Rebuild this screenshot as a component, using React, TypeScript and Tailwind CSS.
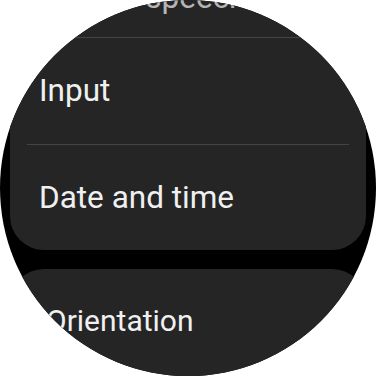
export default function App() {
  const font = { fontFamily: "Roboto, 'Noto Sans', sans-serif" };

  return (
    <div className="w-[376px] h-[376px] bg-white">
      <div
        className="relative w-[376px] h-[376px] rounded-full overflow-hidden bg-black"
        style={font}
      >
        <div className="flex flex-col gap-[19px] px-[10px]">
          {/* Settings card */}
          <div className="bg-[#252525] rounded-b-[34px]">
            <div className="h-[37px] flex items-end pb-[21px] pl-[30px]">
              <span className="text-[31.5px] leading-[36px] text-[#b5b5b5] whitespace-nowrap">
                Text-to-speech
              </span>
            </div>
            <div className="mx-[17px] h-px bg-[#444444]" />
            <div className="h-[106px] flex items-center pl-[29px]">
              <span className="text-[31.5px] leading-[36px] text-[#f0f0f0]">Input</span>
            </div>
            <div className="mx-[17px] h-px bg-[#444444]" />
            <div className="h-[105px] flex items-center pl-[29px]">
              <span className="text-[31.5px] leading-[36px] text-[#f0f0f0]">
                Date and time
              </span>
            </div>
          </div>

          {/* Next card */}
          <div className="bg-[#252525] rounded-t-[34px] h-[130px]">
            <div className="h-[104px] flex items-center pl-[36px]">
              <span className="text-[30px] leading-[36px] text-[#f0f0f0]">
                Orientation
              </span>
            </div>
          </div>
        </div>
      </div>
    </div>
  );
}
